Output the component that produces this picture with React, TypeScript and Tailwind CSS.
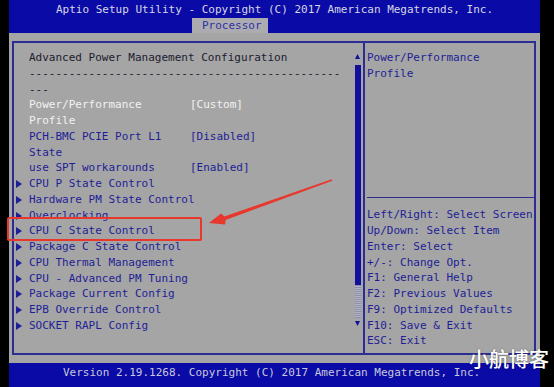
const mono = "font-['DejaVu_Sans_Mono','Liberation_Mono',monospace] text-[11px]";

type Row = {
  lines: string[];
  value?: string;
  tone: "dark" | "white" | "blue";
  sub?: boolean;
};

const rows: Row[] = [
  { lines: ["Advanced Power Management Configuration"], tone: "dark" },
  { lines: ["-".repeat(47), "---"], tone: "dark" },
  { lines: ["Power/Performance", "Profile"], value: "[Custom]", tone: "white" },
  { lines: ["PCH-BMC PCIE Port L1", "State"], value: "[Disabled]", tone: "blue" },
  { lines: ["use SPT workarounds"], value: "[Enabled]", tone: "blue" },
  { lines: ["CPU P State Control"], tone: "blue", sub: true },
  { lines: ["Hardware PM State Control"], tone: "blue", sub: true },
  { lines: ["Overclocking"], tone: "blue", sub: true },
  { lines: ["CPU C State Control"], tone: "blue", sub: true },
  { lines: ["Package C State Control"], tone: "blue", sub: true },
  { lines: ["CPU Thermal Management"], tone: "blue", sub: true },
  { lines: ["CPU - Advanced PM Tuning"], tone: "blue", sub: true },
  { lines: ["Package Current Config"], tone: "blue", sub: true },
  { lines: ["EPB Override Control"], tone: "blue", sub: true },
  { lines: ["SOCKET RAPL Config"], tone: "blue", sub: true },
];

const keys = [
  "Left/Right: Select Screen",
  "Up/Down: Select Item",
  "Enter: Select",
  "+/-: Change Opt.",
  "F1: General Help",
  "F2: Previous Values",
  "F9: Optimized Defaults",
  "F10: Save & Exit",
  "ESC: Exit",
];

const toneClass = {
  dark: "text-[#1c1c30]",
  white: "text-[#f2f2f2]",
  blue: "text-[#1e1e96]",
};

function SubArrow() {
  return (
    <svg width="6" height="8" viewBox="0 0 6 8" className="mt-[4px]">
      <path d="M0 0 L6 4 L0 8 Z" fill="#1e1e96" />
    </svg>
  );
}

function MenuRow({ row }: { row: Row }) {
  return (
    <div className={`flex ${toneClass[row.tone]}`}>
      <div className="w-[15px] shrink-0 pl-[2px]">{row.sub && <SubArrow />}</div>
      <div className={row.value ? "w-[161px] shrink-0" : ""}>
        {row.lines.map((l, i) => (
          <div key={i} className="whitespace-pre">
            {l}
          </div>
        ))}
      </div>
      {row.value && <div className="whitespace-pre">{row.value}</div>}
    </div>
  );
}

function Scrollbar() {
  return (
    <div className="flex w-[7px] shrink-0 flex-col items-center pt-[11px]">
      <svg width="5" height="5" viewBox="0 0 5 5">
        <path d="M2.5 0 L5 5 L0 5 Z" fill="#10109a" />
      </svg>
      <div className="mt-[6px] h-[220px] w-[6px] bg-[#10109c]" />
      <div className="h-[33px] w-[6px] bg-[repeating-linear-gradient(0deg,#8c8cb4_0px,#8c8cb4_1px,#b4b4bc_1px,#b4b4bc_2px)]" />
      <svg width="5" height="5" viewBox="0 0 5 5" className="mt-[3px]">
        <path d="M0 0 L5 0 L2.5 5 Z" fill="#10109a" />
      </svg>
    </div>
  );
}

export default function App() {
  return (
    <div className={`relative flex h-[387px] w-[554px] overflow-hidden bg-black ${mono} leading-[15.75px]`}>
      <div className="w-[9px] shrink-0" />

      <div className="flex w-[531px] shrink-0 flex-col">
        {/* header */}
        <div className="h-[33px] bg-[#0a0aa6]">
          <div className="h-[18px] pl-[47px] pt-[2px] leading-[16px] text-[#d6d6e4] whitespace-pre">
            Aptio Setup Utility - Copyright (C) 2017 American Megatrends, Inc.
          </div>
          <div className="ml-[183px] h-[15px] w-[76px] bg-[#acacb0] pl-[10px] leading-[15px] text-[#3030a4]">
            Processor
          </div>
        </div>

        {/* body */}
        <div className="h-[330px] bg-[#a5a5a5] pt-[8px]">
          <div className="ml-[3px] flex h-[314px] w-[524px] border-2 border-[#2c2c92]">
            <div className="flex w-[349px] shrink-0">
              <div className="w-[340px] shrink-0 pt-[7px]">
                {rows.map((r, i) => (
                  <MenuRow key={i} row={r} />
                ))}
              </div>
              <Scrollbar />
            </div>

            <div className="flex flex-1 flex-col border-l-2 border-[#2c2c92] pt-[7px] text-[#1e1e96]">
              <div className="flex-1 pl-[2px]">
                <div>Power/Performance</div>
                <div>Profile</div>
              </div>
              <div className="ml-[2px] border-t border-[#2c2c92]" />
              <div className="pb-[4px] pl-[2px] pt-[9px]">
                {keys.map((k) => (
                  <div key={k} className="whitespace-pre">
                    {k}
                  </div>
                ))}
              </div>
            </div>
          </div>
        </div>

        {/* footer */}
        <div className="h-[24px] bg-[#0a0aa6] pl-[54px] pt-[2px] leading-[16px] text-[#c8c8da] whitespace-pre">
          Version 2.19.1268. Copyright (C) 2017 American Megatrends, Inc.
        </div>
      </div>

      <div className="flex-1" />

      {/* annotation overlay */}
      <div className="pointer-events-none absolute left-[7px] top-[217px] h-[24px] w-[195px] rounded-[2px] border-2 border-[#e8372c]" />
      <svg className="pointer-events-none absolute left-0 top-0" width="554" height="387" viewBox="0 0 554 387">
        <polygon
          points="209,223 221,213.4 224.4,216.6 331.7,179.2 332.3,180.8 225.6,220 225.1,224.6"
          fill="#e8372c"
        />
      </svg>
      <div className="pointer-events-none absolute left-[469px] top-[349px] font-['Noto_Sans_CJK_SC',sans-serif] text-[20px] font-medium leading-[20px] text-white [text-shadow:0_0_2px_rgba(0,0,0,0.4)]">
        小航博客
      </div>
    </div>
  );
}
